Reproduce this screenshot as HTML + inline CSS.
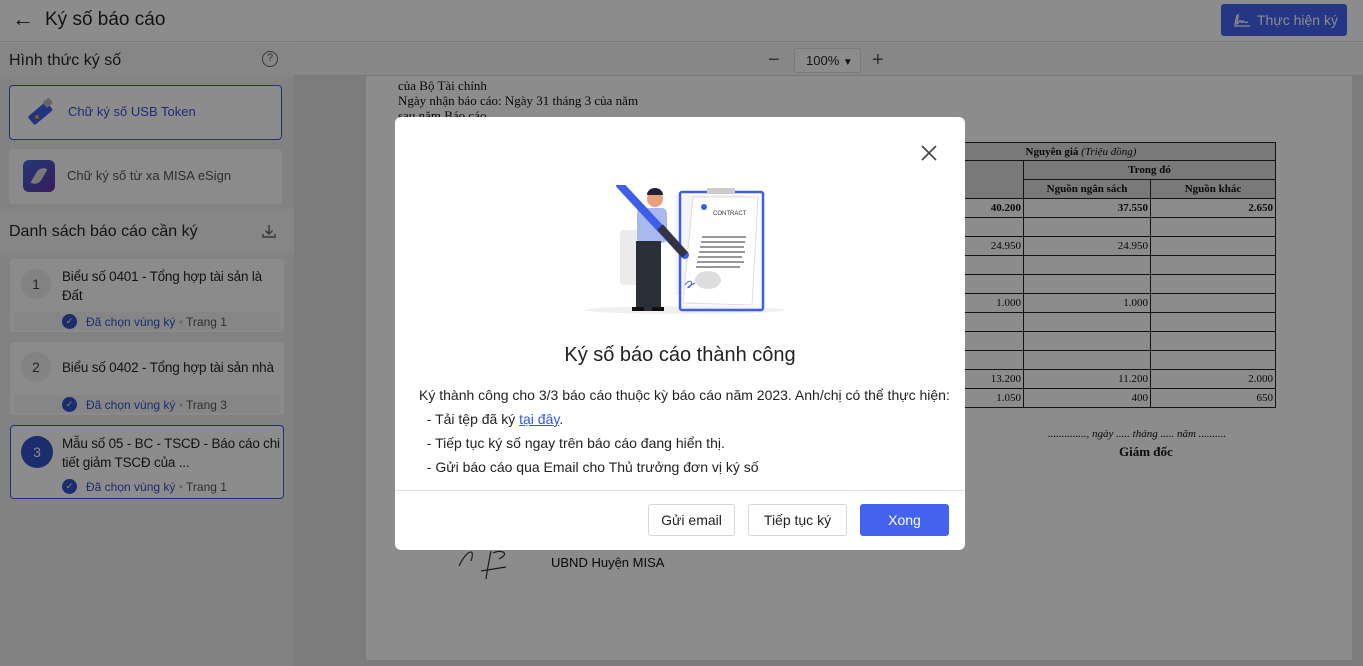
<!DOCTYPE html>
<html><head><meta charset="utf-8"><style>
*{box-sizing:border-box;margin:0;padding:0}
body{width:1363px;height:666px;overflow:hidden;position:relative;font-family:"Liberation Sans",Roboto,sans-serif;background:#8c8c8c;color:#131313}
.abs{position:absolute}
.hdr{left:0;top:0;width:1363px;height:42px;background:#8c8c8c;border-bottom:1px solid #797979}
.side{left:0;top:43px;width:294px;height:623px;background:#868686}
.docbg{left:294px;top:43px;width:1069px;height:623px;background:#7c7c7c}
.tool{left:294px;top:43px;width:1069px;height:33px;background:#878787;border-bottom:1px solid #797979}
.page{left:366px;top:76px;width:986px;height:584px;background:#8c8c8c;font-family:"Liberation Serif",serif;font-size:13px;color:#090909}
table{border-collapse:collapse;font-family:"Liberation Serif",serif;font-size:11px}
td{border:1px solid #131313;height:19px;text-align:right;padding:0 2px}
.card{background:#8b8b8b;border-radius:4px}
.item .t{font-size:13.5px;line-height:19px;color:#131313;letter-spacing:-0.2px}
.sub{font-size:12px;color:#1c2d6e}
.chk{position:absolute;width:15px;height:15px;border-radius:50%;background:#1c2d6e;color:#8c8c8c;font-size:9px;text-align:center;line-height:15px}
.modal{left:395px;top:117px;width:570px;height:433px;background:#fff;border-radius:6px}
.btn{position:absolute;top:387px;height:32px;border:1px solid #d6d6d6;border-radius:3px;font-size:14px;line-height:30px;text-align:center;background:#fff;color:#222}
.th{background:#797979;text-align:center;font-weight:bold}
</style></head><body>
<div class="abs hdr">
 <div class="abs" style="left:12px;top:6px;font-size:22px">&#8592;</div>
 <div class="abs" style="left:45px;top:9px;font-size:19px">Ký số báo cáo</div>
 <div class="abs" style="left:1221px;top:4px;width:126px;height:32px;background:#253684;border-radius:3px;color:#8c8c8c;font-size:14px;line-height:32px;padding-left:36px">Thực hiện ký
  <svg class="abs" style="left:12px;top:9px" width="18" height="14" viewBox="0 0 18 14"><path d="M2 12 C3 6 4 1 5 2 C6 4 3 10 4 11 C6 9 7 7 8 8 C8 10 9 10 10 8 C11 9 12 10 15 9 M1 13 H17" stroke="#8c8c8c" stroke-width="1.3" fill="none"/></svg></div>
</div>
<div class="abs side">
 <div class="abs" style="left:9px;top:9px;font-size:16px">Hình thức ký số</div>
 <div class="abs" style="left:262px;top:8px;width:16px;height:16px;border:1.5px solid #383838;border-radius:50%;font-size:11px;text-align:center;line-height:13px;color:#383838">?</div>
 <div class="abs" style="left:0;top:34px;width:294px;height:132px;background:#828282"></div>
 <div class="abs card" style="left:9px;top:42px;width:273px;height:55px;border:1px solid #20317b;background:#8c8c8c">
  <svg class="abs" style="left:14px;top:12px" width="34" height="30" viewBox="0 0 34 30"><rect x="4" y="10" width="24" height="11" rx="2" transform="rotate(-40 16 15)" fill="#20347f"/><rect x="20" y="1" width="8" height="7" transform="rotate(-40 24 5)" fill="#676767"/><circle cx="13" cy="19" r="2" fill="#875b13"/></svg>
  <div class="abs" style="left:58px;top:18px;font-size:13px;color:#1d2d76">Chữ ký số USB Token</div></div>
 <div class="abs card" style="left:9px;top:106px;width:273px;height:55px">
  <div class="abs" style="left:14px;top:11px;width:32px;height:32px;border-radius:6px;background:linear-gradient(135deg,#213b77,#3a1a5a)"><div style="position:absolute;left:12px;top:6px;width:8px;height:20px;border-radius:8px 0;background:#797979;transform:rotate(30deg)"></div></div>
  <div class="abs" style="left:58px;top:19px;font-size:13px;color:#2f2f2f">Chữ ký số từ xa MISA eSign</div></div>
 <div class="abs" style="left:9px;top:180px;font-size:16px">Danh sách báo cáo cần ký</div>
 <svg class="abs" style="left:261px;top:180px" width="16" height="16" viewBox="0 0 16 16"><path d="M8 2v9M4.5 7.5 8 11l3.5-3.5M2 11v3h12v-3" stroke="#383838" stroke-width="1.4" fill="none"/></svg>
 <div class="abs" style="left:0;top:210px;width:294px;height:413px;background:#828282"></div>
 <div class="abs card item" style="left:10px;top:216px;width:274px;height:73px">
  <div class="abs" style="left:11px;top:10px;width:30px;height:30px;border-radius:50%;background:#838383;text-align:center;line-height:30px;font-size:14px;color:#252525">1</div>
  <div class="abs t" style="left:52px;top:8px;width:218px">Biểu số 0401 - Tổng hợp tài sản là Đất</div>
  <div class="abs" style="left:4px;top:53px;width:266px;height:18px;background:#868686"></div>
  <div class="chk" style="left:52px;top:55px">✓</div>
  <div class="abs sub" style="left:76px;top:56px">Đã chọn vùng ký <span style="color:#676767">•</span> <span style="color:#2f2f2f">Trang 1</span></div></div>
 <div class="abs card item" style="left:10px;top:299px;width:274px;height:73px">
  <div class="abs" style="left:11px;top:10px;width:30px;height:30px;border-radius:50%;background:#838383;text-align:center;line-height:30px;font-size:14px;color:#252525">2</div>
  <div class="abs t" style="left:52px;top:16px;width:222px;white-space:nowrap">Biểu số 0402 - Tổng hợp tài sản nhà</div>
  <div class="abs" style="left:4px;top:53px;width:266px;height:18px;background:#868686"></div>
  <div class="chk" style="left:52px;top:55px">✓</div>
  <div class="abs sub" style="left:76px;top:56px">Đã chọn vùng ký <span style="color:#676767">•</span> <span style="color:#2f2f2f">Trang 3</span></div></div>
 <div class="abs card item" style="left:10px;top:382px;width:274px;height:74px;border:1px solid #20317b;background:#8c8c8c">
  <div class="abs" style="left:10px;top:10px;width:32px;height:32px;border-radius:50%;background:#1c2d6e;text-align:center;line-height:32px;font-size:14px;color:#8c8c8c">3</div>
  <div class="abs t" style="left:51px;top:8px;width:218px">Mẫu số 05 - BC - TSCĐ - Báo cáo chi tiết giảm TSCĐ của ...</div>
  <div class="chk" style="left:51px;top:53px">✓</div>
  <div class="abs sub" style="left:75px;top:54px">Đã chọn vùng ký <span style="color:#676767">•</span> <span style="color:#2f2f2f">Trang 1</span></div></div>
</div>
<div class="abs docbg"></div>
<div class="abs page">
 <div class="abs" style="left:32px;top:2px">của Bộ Tài chính</div>
 <div class="abs" style="left:32px;top:17px">Ngày nhận báo cáo: Ngày 31 tháng 3 của năm</div>
 <div class="abs" style="left:32px;top:32px">sau năm Báo cáo</div>
 <table class="abs" style="left:520px;top:66px;width:390px">
  <tr><td colspan="3" class="th" style="height:18px">Nguyên giá <i style="font-weight:normal">(Triệu đồng)</i></td></tr>
  <tr><td rowspan="2" class="th" style="width:137px;text-align:left">ng</td><td colspan="2" class="th">Trong đó</td></tr>
  <tr><td class="th" style="width:127px">Nguồn ngân sách</td><td class="th">Nguồn khác</td></tr>
  <tr style="font-weight:bold"><td>40.200</td><td>37.550</td><td>2.650</td></tr>
  <tr><td></td><td></td><td></td></tr>
  <tr><td>24.950</td><td>24.950</td><td></td></tr>
  <tr><td></td><td></td><td></td></tr>
  <tr><td></td><td></td><td></td></tr>
  <tr><td>1.000</td><td>1.000</td><td></td></tr>
  <tr><td></td><td></td><td></td></tr>
  <tr><td></td><td></td><td></td></tr>
  <tr><td></td><td></td><td></td></tr>
  <tr><td>13.200</td><td>11.200</td><td>2.000</td></tr>
  <tr><td>1.050</td><td>400</td><td>650</td></tr>
 </table>
 <div class="abs" style="left:682px;top:352px;font-size:11px;font-style:italic">.............., ngày ..... tháng ..... năm ..........</div>
 <div class="abs" style="left:753px;top:368px;font-weight:bold">Giám đốc</div>
 <svg class="abs" style="left:85px;top:465px" width="90" height="40" viewBox="0 0 90 40"><path d="M8 25 C15 10 25 5 20 20 M30 30 L55 26 M40 10 C38 20 36 30 35 38 M42 12 C50 8 60 12 48 18" stroke="#1c1c1c" stroke-width="1.2" fill="none"/></svg>
 <div class="abs" style="left:185px;top:479px;font-family:'Liberation Sans',sans-serif">UBND Huyện MISA</div>
</div>
<div class="abs tool">
 <div class="abs" style="left:474px;top:5px;font-size:20px;line-height:24px;color:#2f2f2f">&#8722;</div>
 <div class="abs" style="left:500px;top:5px;width:67px;height:25px;border:1px solid #797979;border-radius:3px;background:#8c8c8c;font-size:13px;line-height:23px;padding-left:11px">100% <span style="font-size:10px">▼</span></div>
 <div class="abs" style="left:578px;top:5px;font-size:20px;line-height:24px;color:#2f2f2f">+</div>
</div>
<div class="abs modal">
 <svg class="abs" style="left:526px;top:28px" width="16" height="16" viewBox="0 0 16 16"><path d="M1 1L15 15M15 1L1 15" stroke="#444" stroke-width="1.6"/></svg>
 <svg class="abs" style="left:185px;top:68px" width="210" height="132" viewBox="0 0 210 132">
  <ellipse cx="105" cy="125" rx="100" ry="4" fill="#f0f0f0"/>
  <rect x="40" y="45" width="20" height="55" rx="4" fill="#ececec"/>
  <rect x="95" y="10" width="70" height="100" fill="#f4f4f4"/>
  <rect x="100" y="7" width="83" height="118" rx="2" fill="none" stroke="#3f5ee8" stroke-width="2.5"/>
  <rect x="127" y="3" width="28" height="6" fill="#ccc"/>
  <path d="M113 12 L178 12 L172 120 L103 118 Z" fill="#fff" stroke="#ddd"/>
  <circle cx="124" cy="22" r="3" fill="#3f5ee8"/>
  <text x="133" y="30" font-size="6" font-family="Liberation Sans" fill="#333">CONTRACT</text>
  <g stroke="#777" stroke-width="1.5"><path d="M122 52H166M121 57H165M120 62H164M119 67H165M118 72H162M117 77H164M116 82H160"/></g>
  <ellipse cx="128" cy="95" rx="13" ry="9" fill="#ddd"/>
  <path d="M105 100c4-6 8-4 6 0s-8 4 4-2" stroke="#3f5ee8" fill="none"/>
  <rect x="57" y="23" width="30" height="35" rx="5" fill="#a9b9ef"/>
  <circle cx="75" cy="14" r="8" fill="#e8a07a"/><path d="M67 10a8 7 0 0 1 16 0z" fill="#223"/>
  <rect x="56" y="56" width="25" height="70" fill="#2b2f38"/>
  <path d="M40 0 L105 70" stroke="#3f5ee8" stroke-width="8" stroke-linecap="round"/>
  <path d="M80 42 L105 70" stroke="#334" stroke-width="8"/>
  <rect x="52" y="122" width="12" height="4" fill="#111"/><rect x="72" y="122" width="12" height="4" fill="#111"/>
 </svg>
 <div class="abs" style="left:0;top:227px;width:570px;text-align:center;font-size:20px;color:#222">Ký số báo cáo thành công</div>
 <div class="abs" style="left:24px;top:266px;font-size:14px;line-height:24px;color:#222">Ký thành công cho 3/3 báo cáo thuộc kỳ báo cáo năm 2023. Anh/chị có thể thực hiện:<br>&nbsp; - Tải tệp đã ký <span style="color:#2f55e0;text-decoration:underline">tại đây</span>.<br>&nbsp; - Tiếp tục ký số ngay trên báo cáo đang hiển thị.<br>&nbsp; - Gửi báo cáo qua Email cho Thủ trưởng đơn vị ký số</div>
 <div class="abs" style="left:0;top:373px;width:570px;height:1px;background:#e0e0e0"></div>
 <div class="btn" style="left:253px;width:87px">Gửi email</div>
 <div class="btn" style="left:353px;width:99px">Tiếp tục ký</div>
 <div class="btn" style="left:465px;width:89px;background:#4463f0;border-color:#4463f0;color:#fff">Xong</div>
</div>
</body></html>
